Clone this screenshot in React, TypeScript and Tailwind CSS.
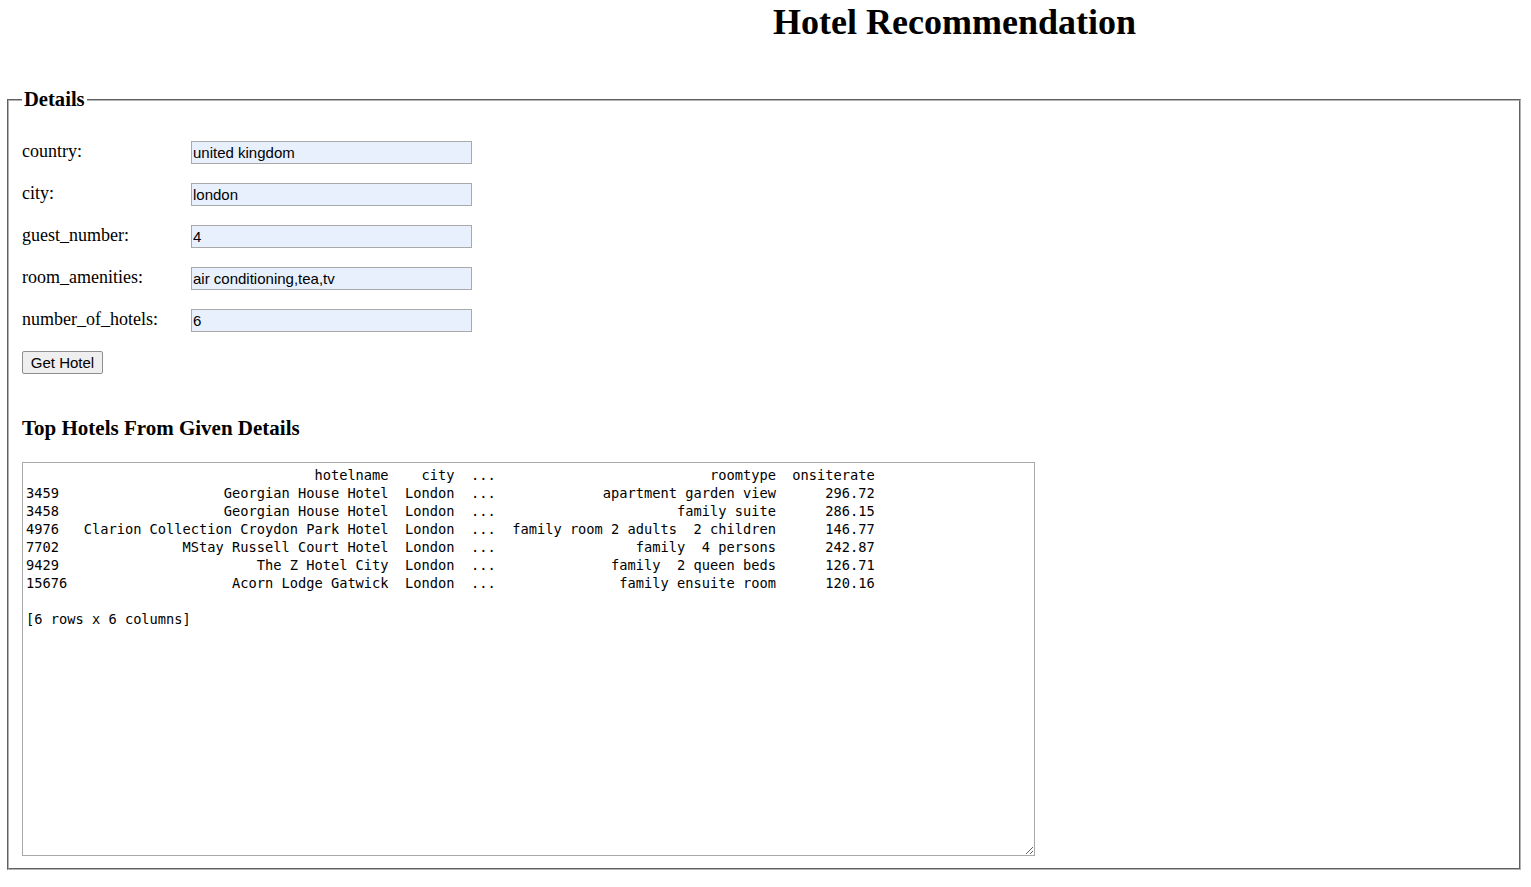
import React from "react";

const rows: [string, string, string, string, string][] = [
  ["3459", "Georgian House Hotel", "London", "apartment garden view", "296.72"],
  ["3458", "Georgian House Hotel", "London", "family suite", "286.15"],
  ["4976", "Clarion Collection Croydon Park Hotel", "London", "family room 2 adults  2 children", "146.77"],
  ["7702", "MStay Russell Court Hotel", "London", "family  4 persons", "242.87"],
  ["9429", "The Z Hotel City", "London", "family  2 queen beds", "126.71"],
  ["15676", "Acorn Lodge Gatwick", "London", "family ensuite room", "120.16"],
];

function line(idx: string, name: string, city: string, dots: string, room: string, rate: string) {
  return (
    idx.padEnd(5) +
    "  " +
    name.padStart(37) +
    "  " +
    city.padStart(6) +
    "  " +
    dots.padStart(3) +
    "  " +
    room.padStart(32) +
    "  " +
    rate.padStart(10)
  );
}

const text =
  [
    line("", "hotelname", "city", "...", "roomtype", "onsiterate"),
    ...rows.map((r) => line(r[0], r[1], r[2], "...", r[3], r[4])),
    "",
    "[6 rows x 6 columns]",
  ].join("\n");

const fields: [string, string][] = [
  ["country:", "united kingdom"],
  ["city:", "london"],
  ["guest_number:", "4"],
  ["room_amenities:", "air conditioning,tea,tv"],
  ["number_of_hotels:", "6"],
];

export default function App() {
  return (
    <div className="min-h-[887px] bg-white text-black font-['Liberation_Serif','Times_New_Roman',serif]">
      <h1 className="pt-[2px] pl-[378px] text-center text-[36px] leading-[41px] font-bold">
        Hotel Recommendation
      </h1>
      <fieldset className="mt-[45px] ml-[7px] w-[1514px] border-2 [border-style:groove] border-[#b4b4b4] px-[13px] pb-[12px]">
        <legend className="px-[2px] text-[20.6px] leading-[23px] font-bold">Details</legend>
        <div className="mt-[30px] flex flex-col gap-[19px]">
          {fields.map(([label, value]) => (
            <div key={label} className="flex h-[23px] items-center">
              <label className="w-[169px] text-[18px] leading-[21px] -translate-y-[1px]">{label}</label>
              <input
                readOnly
                value={value}
                className="h-[23px] w-[281px] border border-[#a9a9a9] bg-[#e8f0fe] px-[1px] text-[15px] text-black font-['Liberation_Sans',Arial,sans-serif] outline-none"
              />
            </div>
          ))}
          <div className="flex">
            <button className="h-[23px] w-[81px] rounded-[2px] border border-[#8f8f8f] bg-[#efefef] text-[15px] text-black font-['Liberation_Sans',Arial,sans-serif]">
              Get Hotel
            </button>
          </div>
        </div>
        <h3 className="mt-[42px] text-[21px] leading-[24px] font-bold">Top Hotels From Given Details</h3>
        <textarea
          readOnly
          wrap="off"
          value={text}
          className="mt-[22px] block h-[394px] w-[1013px] border border-[#a9a9a9] bg-white px-[3px] py-[3px] text-[13.7px] leading-[18px] text-black whitespace-pre font-['DejaVu_Sans_Mono',monospace] outline-none"
        />
      </fieldset>
    </div>
  );
}
